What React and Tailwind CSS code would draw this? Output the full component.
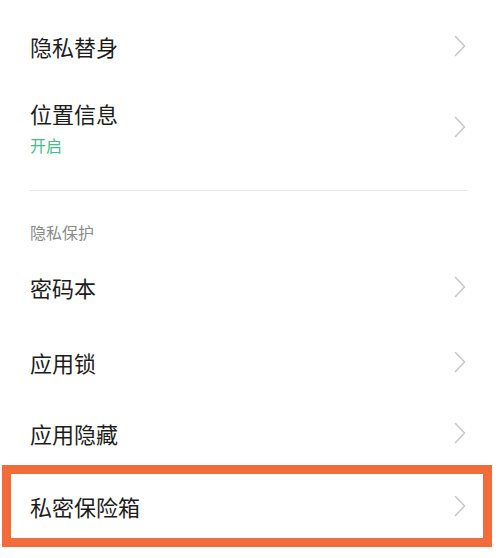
const font = { fontFamily: '"Noto Sans CJK SC", "Noto Sans", sans-serif' };

function Chevron() {
  return (
    <svg width="12" height="22" viewBox="0 0 12 22" fill="none" className="shrink-0">
      <polyline points="1.5,1.5 10.5,11 1.5,20.5" stroke="#c8c8c8" strokeWidth="1.6" strokeLinecap="round" strokeLinejoin="round" />
    </svg>
  );
}

function Row({ title, h }) {
  return (
    <div className={`flex items-center justify-between pl-[30px] pr-[34px] ${h}`}>
      <span className="text-[22px] leading-[30px] text-[#1c1c1c]">{title}</span>
      <Chevron />
    </div>
  );
}

export default function App() {
  return (
    <div className="w-[500px] h-[558px] bg-white overflow-hidden pt-[10px]" style={font}>
      <Row title="隐私替身" h="h-[72px]" />

      <div className="flex items-center justify-between pl-[30px] pr-[34px] pt-[16px] pb-[14px]">
        <div className="flex flex-col">
          <span className="text-[22px] leading-[30px] text-[#1c1c1c]">位置信息</span>
          <span className="mt-[6px] text-[16px] leading-[22px] text-[#45bd8b]">开启</span>
        </div>
        <Chevron />
      </div>

      <div className="mt-[20px] ml-[30px] mr-[33px] h-px bg-[#e6e6e6]" />

      <div className="pl-[30px] pt-[30px] text-[16px] leading-[22px] text-[#8a8a8a]">隐私保护</div>

      <div className="mt-[7px]">
        <Row title="密码本" h="h-[74px]" />
        <Row title="应用锁" h="h-[76px]" />
        <Row title="应用隐藏" h="h-[65px]" />
      </div>

      <div className="ml-[2px] w-[490px] h-[82px] border-[9px] border-[#f26b3a] flex items-center justify-between pl-[19px] pr-[17px]">
        <span className="text-[22px] leading-[30px] text-[#1c1c1c]">私密保险箱</span>
        <Chevron />
      </div>
    </div>
  );
}
